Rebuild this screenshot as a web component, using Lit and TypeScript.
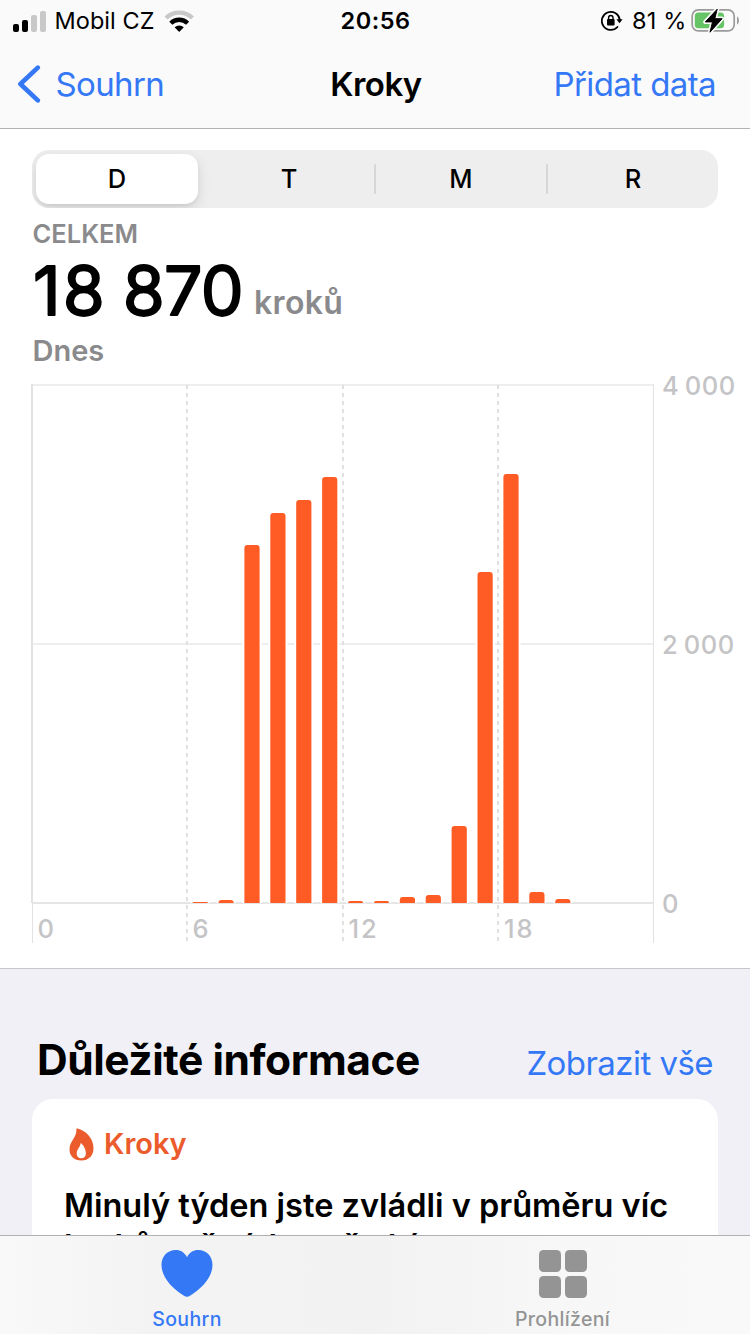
import { LitElement, html, svg, css } from "lit";
import { customElement, state } from "lit/decorators.js";
import { classMap } from "lit/directives/class-map.js";

const FONT = css`"Inter", "Liberation Sans", sans-serif`;

@customElement("status-bar")
class StatusBar extends LitElement {
  static styles = css`
    :host { display: grid; grid-template-columns: 1fr auto 1fr; align-items: center; height: 40px; padding: 0 10px 0 10px; font: 400 23.5px/42px ${FONT}; color: #000; }
    .side { display: flex; align-items: center; height: 40px; }
    .end { justify-content: flex-end; }
    .signal { margin-left: 3px; margin-right: 7.5px; margin-bottom: 1px; }
    .carrier { letter-spacing: 0.05px; }
    .wifi { margin-left: 9.5px; margin-bottom: 1px; }
    .time { font-weight: 600; letter-spacing: 0.5px; padding-left: 1px; }
    .lock { margin-right: 9px; }
    .percent { margin-right: 4.5px; letter-spacing: 0.2px; }
  `;
  render() {
    return html`
      <div class="side">
        <svg class="signal" width="34" height="22" viewBox="0 0 34 22">
          <rect x="0" y="14" width="6" height="8" rx="2" /><rect x="9" y="10" width="6" height="12" rx="2" />
          <g fill="#c8c8c8"><rect x="18" y="5" width="6" height="17" rx="2" /><rect x="27" y="1" width="6" height="21" rx="2" /></g>
        </svg>
        <span class="carrier">Mobil CZ</span>
        <svg class="wifi" width="32" height="24" viewBox="0 0 32 24">
          <path d="M2 9A19 19 0 0 1 28.4 9" fill="none" stroke="#c8c8c8" stroke-width="4.4" />
          <path d="M6.8 14.2A12 12 0 0 1 23.6 14.2" fill="none" stroke="#000" stroke-width="4.4" />
          <path d="M15.2 23l-4.6-4.7a6.5 6.5 0 0 1 9.2 0z" />
        </svg>
      </div>
      <span class="time">20:56</span>
      <div class="side end">
        <svg class="lock" width="22" height="22" viewBox="0 0 22 22">
          <path d="M16.4 17A9 9 0 1 1 18.7 9.5" fill="none" stroke="#000" stroke-width="1.8" stroke-linecap="round" />
          <path d="M15.4 9.3h6.2l-3.1 4z" />
          <rect x="6" y="9" width="7.6" height="6.4" rx="1" />
          <path d="M7.6 9.4V7.7a2.2 2.2 0 0 1 4.4 0v1.7" fill="none" stroke="#000" stroke-width="1.4" />
        </svg>
        <span class="percent">81 %</span>
        <svg width="49" height="26" viewBox="0 0 49 26">
          <rect x="1.2" y="1.9" width="42" height="21" rx="6.2" fill="none" stroke="#9b9b9b" stroke-width="1.7" />
          <path d="M46 8.4c2.6 1 2.6 7 0 8z" fill="#9b9b9b" />
          <rect x="3.8" y="4.5" width="29.3" height="15.8" rx="3.6" fill="#65c466" />
          <path d="M26.2 1.2L14.3 13.9H21.5L19 24.2L31.1 10.7H23.8Z" fill="#000" stroke="#fafafa" stroke-width="4.2" stroke-linejoin="round" />
          <path d="M26.2 1.2L14.3 13.9H21.5L19 24.2L31.1 10.7H23.8Z" stroke="#000" stroke-width="1" stroke-linejoin="round" />
        </svg>
      </div>
    `;
  }
}

@customElement("nav-bar")
class NavBar extends LitElement {
  static styles = css`
    :host { display: grid; grid-template-columns: 1fr auto 1fr; align-items: center; height: 88px; padding: 0 17px; font: 400 33px/88px ${FONT}; color: #3478f6; }
    .back { display: flex; align-items: center; gap: 14.5px; letter-spacing: -0.65px; }
    .title { color: #000; font-weight: 600; letter-spacing: -0.5px; padding-left: 2px; }
    .add { text-align: right; letter-spacing: -0.6px; padding-right: 17px; }
  `;
  render() {
    return html`
      <div class="back">
        <svg width="24" height="38" viewBox="0 0 24 38"><path d="M20.8 2.6L3.4 19L20.8 35.4" fill="none" stroke="#3478f6" stroke-width="4.6" stroke-linecap="round" stroke-linejoin="round" /></svg>
        <span>Souhrn</span>
      </div>
      <span class="title">Kroky</span>
      <span class="add">Přidat data</span>
    `;
  }
}

@customElement("range-picker")
class RangePicker extends LitElement {
  static styles = css`
    :host { display: flex; flex: none; height: 58px; margin: 0 32px; padding: 4px 0 4px 4px; box-sizing: border-box; background: #eeeeee; border-radius: 17px; overflow: hidden; font: 500 25.5px/50px ${FONT}; }
    .item { flex: 0 0 162px; text-align: center; }
    .item.on { background: #fff; border-radius: 13px; box-shadow: 0 5px 13px rgba(0,0,0,.12), 0 2px 3px rgba(0,0,0,.05); }
    .line { width: 2px; height: 30px; align-self: center; background: #d6d6d6; border-radius: 1px; }
    .cell { flex: 1; text-align: center; }
    .lead { width: 6px; }
  `;
  @state() selected = "D";
  render() {
    return html`
      <div class=${classMap({ item: true, on: this.selected === "D" })}>D</div>
      <span class="lead"></span>
      <span class="cell">T</span><span class="line"></span>
      <span class="cell">M</span><span class="line"></span>
      <span class="cell">R</span>
    `;
  }
}

interface Bar { hour: number; top: number }

@customElement("steps-chart")
class StepsChart extends LitElement {
  static styles = css`
    :host { display: block; flex: none; height: 592px; }
    svg { display: block; }
    .label { font: 500 25.5px ${FONT}; fill: #c4c4c6; }
    .steps { letter-spacing: 0.6px; word-spacing: -2px; }
    .pair { letter-spacing: 2px; }
    .bar { fill: #ff5b24; }
    .halo { fill: #fff; }
  `;
  bars: Bar[] = [
    { hour: 6, top: 902 }, { hour: 7, top: 900 }, { hour: 8, top: 545 }, { hour: 9, top: 513 },
    { hour: 10, top: 500 }, { hour: 11, top: 477 }, { hour: 12, top: 901 }, { hour: 13, top: 901 },
    { hour: 14, top: 897 }, { hour: 15, top: 895 }, { hour: 16, top: 826 }, { hour: 17, top: 572 },
    { hour: 18, top: 474 }, { hour: 19, top: 892 }, { hour: 20, top: 899 },
  ];
  private x(hour: number) { return 37.2 + hour * 25.9; }
  private shape(b: Bar) {
    const x = this.x(b.hour);
    const r = Math.min(3, 903 - b.top);
    return `M${x} 903V${b.top + r}q0 ${-r} ${r} ${-r}h${15.2 - 2 * r}q${r} 0 ${r} ${r}V903z`;
  }
  render() {
    return html`
      <svg width="750" height="592" viewBox="0 376 750 592">
        <g fill="#eeeeee">
          <rect x="32" y="384" width="622" height="2" />
          <rect x="32" y="643" width="622" height="2" />
        </g>
        <rect x="32" y="902" width="622" height="2" fill="#e5e5e5" />
        ${this.bars.map((b) => svg`<rect class="halo" x=${this.x(b.hour) - 2} y=${b.top - 2} width="19.2" height=${905 - b.top} />`)}
        <g fill="#e2e2e2">
          <rect x="31" y="384" width="2" height="519" />
          <rect x="32" y="903" width="1" height="40" />
          <rect x="653" y="384" width="1" height="559" />
        </g>
        <g stroke="#e0e0e0" stroke-width="2" stroke-dasharray="4 4">
          <path d="M187 385V941M343 385V941M498 385V941" />
        </g>
        ${this.bars.map((b) => svg`<path class="bar" d=${this.shape(b)} />`)}
        <text class="label steps" x="662" y="395">4 000</text>
        <text class="label steps" x="662" y="654">2 000</text>
        <text class="label" x="662" y="913">0</text>
        <text class="label" x="37.5" y="938">0</text>
        <text class="label" x="192.5" y="938">6</text>
        <text class="label pair" x="348.5" y="938">12</text>
        <text class="label pair" x="504" y="938">18</text>
      </svg>
    `;
  }
}

@customElement("tab-bar")
class TabBar extends LitElement {
  static styles = css`
    :host { display: flex; flex: none; height: 98px; border-top: 1px solid #b0b0b2; background: linear-gradient(90deg, #f9f9f9, #f3f3f3 20%, #f2f2f2 50%, #f7f7f7 75%, #f9f9f9); font: 500 19.5px/24px ${FONT}; }
    .tab { flex: 1; display: flex; flex-direction: column; align-items: center; color: #949494; }
    .tab.active { color: #3478f6; }
    .icon { margin-top: 13px; height: 50px; }
    .active .icon { margin-right: 1px; }
    .active .text { margin-right: 1px; }
    .text { margin-top: 8px; letter-spacing: 0.35px; }
  `;
  render() {
    return html`
      <div class="tab active">
        <svg class="icon" width="52" height="50" viewBox="0 0 52 50"><path fill="currentColor" d="M26 8.2C28.2 3.6 32.4 1 37.2 1C45.8 1 51.5 7.4 51.5 15.8C51.5 28.5 40.8 39.3 29 46.7Q26 48.6 23 46.7C11.2 39.3 .5 28.5 .5 15.8C.5 7.4 6.2 1 14.8 1C19.6 1 23.8 3.6 26 8.2Z" /></svg>
        <span class="text">Souhrn</span>
      </div>
      <div class="tab">
        <svg class="icon" width="48" height="50" viewBox="0 0 48 50" fill="currentColor">
          <rect y="1" width="22" height="22" rx="4.5" /><rect x="26" y="1" width="22" height="22" rx="4.5" />
          <rect y="27" width="22" height="22" rx="4.5" /><rect x="26" y="27" width="22" height="22" rx="4.5" />
        </svg>
        <span class="text">Prohlížení</span>
      </div>
    `;
  }
}

@customElement("app-root")
class AppRoot extends LitElement {
  static styles = css`
    :host { display: flex; flex-direction: column; width: 750px; height: 1334px; overflow: hidden; background: #f1f0f6; font-family: ${FONT}; color: #000; }
    .top { flex: none; background: #fafafa; border-bottom: 1px solid #b2b2b4; height: 128px; }
    .scroll { flex: 1; min-height: 0; overflow: hidden; }
    .panel { background: #fff; padding-top: 21px; height: 840px; box-sizing: border-box; border-bottom: 1px solid #c6c6c8; display: flex; flex-direction: column; }
    .summary { flex: none; height: 168px; padding-left: 32px; color: #8a8a8d; font-weight: 600; display: flex; flex-direction: column; box-sizing: border-box; }
    .caption { font-size: 25.5px; line-height: 32px; margin-top: 10px; letter-spacing: 0; padding-left: 0.5px; }
    .number { display: block; width: 222px; height: 76px; overflow: visible; }
    .digits { font: 400 68px ${FONT}; letter-spacing: -0.7px; word-spacing: 0; fill: #000; stroke: #000; stroke-width: 1.8px; stroke-linejoin: round; }
    .wide { letter-spacing: 2.2px; }
    .unit { font-size: 32px; letter-spacing: 0.35px; line-height: 40px; margin-top: 33px; }
    .row { display: flex; align-items: flex-start; height: 76px; }
    .day { font-size: 29px; line-height: 36px; margin-top: 7px; letter-spacing: 0; padding-left: 0.5px; }
    .heading { display: flex; justify-content: space-between; align-items: baseline; padding: 65px 37px 0 37px; height: 130px; box-sizing: border-box; }
    .heading .name { font-size: 42.5px; line-height: 52px; font-weight: 700; letter-spacing: -0.45px; }
    .heading .all { font-size: 33px; color: #3478f6; letter-spacing: -0.55px; }
    .card { margin: 0 32px; background: #fff; border-radius: 21px; padding: 27px 32px 0; height: 180px; box-sizing: border-box; }
    .kind { display: flex; align-items: center; gap: 10px; height: 36px; padding-left: 5px; color: #ec5b2b; font-size: 29px; font-weight: 600; line-height: 36px; }
    .message { margin-top: 23px; font-size: 32.5px; line-height: 41px; font-weight: 600; letter-spacing: 0; white-space: nowrap; }
  `;
  render() {
    return html`
      <div class="top"><status-bar></status-bar><nav-bar></nav-bar></div>
      <div class="scroll">
        <div class="panel">
          <range-picker></range-picker>
          <div class="summary">
            <div class="caption">CELKEM</div>
            <div class="row">
              <svg class="number"><text class="digits" x="1" y="65"><tspan class="wide">1</tspan>8 870</text></svg>
              <span class="unit">kroků</span>
            </div>
            <div class="day">Dnes</div>
          </div>
          <steps-chart></steps-chart>
        </div>
        <div class="heading"><span class="name">Důležité informace</span><span class="all">Zobrazit vše</span></div>
        <div class="card">
          <div class="kind">
            <svg width="25" height="33" viewBox="0 0 25 33"><path fill="#ec5b2b" fill-rule="evenodd" d="M8.4 .4C16.5 2.3 24.5 9.8 24.5 20.2C24.5 27.6 19.6 32.5 12.3 32.5C5.2 32.5 .5 28 .5 21.2C.5 13.3 7.7 9.6 7.4 1.4Q7.4 .2 8.4 .4ZM11.6 15.4C11 19.3 7.7 21.4 7.7 25.4C7.7 28.4 9.5 30.3 12.2 30.3C15 30.3 16.9 28.4 16.9 25.4C16.9 21.4 14.7 17.3 12.2 15.2Q11.7 14.9 11.6 15.4Z" /></svg>
            <span>Kroky</span>
          </div>
          <div class="message">Minulý týden jste zvládli v průměru víc<br />kroků než týden předtím.</div>
        </div>
      </div>
      <tab-bar></tab-bar>
    `;
  }
}
